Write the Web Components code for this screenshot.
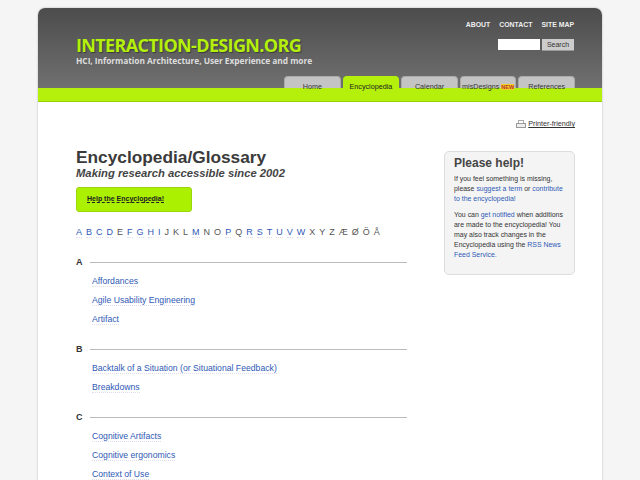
<!DOCTYPE html>
<html>
<head>
<meta charset="utf-8">
<title>Encyclopedia/Glossary</title>
<style>
  html, body { margin: 0; height: 480px; overflow: hidden; background: #f5f5f5; }
  body { font-family: "Liberation Sans", Arial, sans-serif; color: #333; }
</style>
</head>
<body>

<template id="site-header">
  <style>
    :host { display: block; height: 94px; padding: 0; }
    .top {
      height: 80px; display: flex; justify-content: space-between; box-sizing: border-box;
      background: linear-gradient(#4c4c4c, #707070); border-radius: 7px 7px 0 0;
      padding: 0 27px 0 38px; position: relative;
    }
    .logo { padding-top: 28px; }
    .name { font: bold 18px/19px "Open Sans", sans-serif; color: #b4f00c; letter-spacing: -0.65px; text-shadow: 1px 1px 1px #3a3a3a; white-space: nowrap; }
    .tag { font: bold 8.4px/11px "Open Sans", sans-serif; color: #ddd; white-space: nowrap; letter-spacing: -0.05px; }
    .tools { padding-top: 12px; display: flex; flex-direction: column; align-items: flex-end; }
    .tools nav { display: flex; gap: 9px; margin-right: 1px; font: bold 6.9px/9px "Liberation Sans", sans-serif; color: #eee; }
    form { display: flex; gap: 2px; margin: 10px 1px 0 0; }
    .box { width: 42px; height: 11px; background: #fff; }
    .btn { width: 32px; height: 11px; background: #ccc; color: #333; font: 7px/11px "Liberation Sans", sans-serif; text-align: center; border-bottom: 1px solid #999; }
    .tabs { position: absolute; right: 27px; bottom: 0; display: flex; gap: 2px; }
    .bar { height: 14px; background: #b4f00c; border-bottom: 1px solid #9ad00a; box-sizing: border-box; }
  </style>
  <div class="top">
    <div class="logo">
      <div class="name">INTERACTION-DESIGN.ORG</div>
      <div class="tag">HCI, Information Architecture, User Experience and more</div>
    </div>
    <div class="tools">
      <nav><span>ABOUT</span><span>CONTACT</span><span>SITE MAP</span></nav>
      <form><div class="box"></div><div class="btn">Search</div></form>
    </div>
    <div class="tabs"><slot></slot></div>
  </div>
  <div class="bar"></div>
</template>

<template id="nav-tab">
  <style>
    /* label hangs over the lime bar a little, same as the real site */
    :host { display: block; width: 56.6px; height: 12px; background: #c4c4c4; border-radius: 4px 4px 0 0; border: solid #aaa; border-width: 1px 1px 0; box-sizing: border-box; text-align: center; font: 7.2px/19px "Liberation Sans", sans-serif; color: #333; white-space: nowrap; }
    :host([active]) { background: #b4f00c; border-color: #b4f00c; color: #222; }
  </style>
  <slot></slot>
</template>

<template id="help-box">
  <style>
    :host { display: block; width: 131px; height: 124px; box-sizing: border-box; background: #f4f4f4; border: 1px solid #ddd; border-radius: 5px; padding: 4px 9px; font: 6.95px/10px "Liberation Sans", sans-serif; color: #333; }
    h2 { font: bold 12px/15px "Liberation Sans", sans-serif; color: #444; margin: 0 0 3px; }
  </style>
  <h2>Please help!</h2>
  <slot></slot>
</template>

<template id="letter-group">
  <style>
    :host { display: block; margin-bottom: 19px; }
    .head { display: flex; align-items: center; gap: 7px; height: 10px; font: bold 9px/10px "Liberation Sans", sans-serif; color: #333; margin-bottom: 9px; }
    .head i { flex: 1; height: 1px; background: #bbb; }
    .items { display: flex; flex-direction: column; gap: 8px; padding-left: 16px; align-items: flex-start; }
  </style>
  <div class="head"><span></span><i></i></div>
  <div class="items"><slot></slot></div>
</template>

<template id="term-link">
  <style>
    :host { display: block; font: 8.67px/10px "Liberation Sans", sans-serif; color: #2f5ab5; border-bottom: 1px dotted #dde; }
  </style>
  <slot></slot>
</template>

<template id="site-page">
  <style>
    :host { display: block; width: 564px; margin: 8px 0 0 38px; background: #fff; box-shadow: 0 0 2px #aaa; border-radius: 7px 7px 0 0; height: 480px; }
    .print { display: flex; justify-content: flex-end; align-items: center; gap: 2px; padding: 17px 27px 0 0; font: 7.2px/10px "Liberation Sans", sans-serif; color: #333; height: 10px; }
    .print span { text-decoration: underline; }
    .cols { display: flex; justify-content: space-between; padding: 18px 27px 0 38px; }
    .main { width: 331px; }
    .side { margin-top: 4px; }
    h1 { font: bold 17.3px/20px "Liberation Sans", sans-serif; color: #3a3a3a; margin: 0; }
    .sub { font: italic bold 11.25px/14px "Liberation Sans", sans-serif; color: #444; margin: -1px 0 7px; }
    .cta { width: 116px; height: 25px; box-sizing: border-box; background: #abf000; border: 1px solid #9ad60a; border-radius: 3px; padding: 6px 10px; font: bold 7px/10px "Liberation Sans", sans-serif; color: #222; }
    .cta span { border-bottom: 1px dashed #222; }
    .alpha { display: flex; gap: 4px; margin: 15px 0 19px; font: 9px/10px "Liberation Sans", sans-serif; color: #555; }
    .alpha a { color: #2f5ab5; border-bottom: 1px dotted #dde; }
  </style>
  <slot name="header"></slot>
  <div class="print">
    <svg width="10" height="9" viewBox="0 0 10 9"><rect x="2.5" y="0.5" width="5" height="4" fill="#fff" stroke="#aaa"/><rect x="0.5" y="3.5" width="9" height="4" fill="#eee" stroke="#999"/></svg>
    <span>Printer-friendly</span>
  </div>
  <div class="cols">
    <div class="main">
      <h1>Encyclopedia/Glossary</h1>
      <div class="sub">Making research accessible since 2002</div>
      <div class="cta"><span>Help the Encyclopedia!</span></div>
      <div class="alpha">
        <a>A</a><a>B</a><a>C</a><a>D</a><span>E</span><a>F</a><a>G</a><a>H</a><a>I</a><span>J</span><span>K</span><span>L</span><a>M</a><span>N</span><span>O</span><a>P</a><span>Q</span><a>R</a><a>S</a><a>T</a><a>U</a><a>V</a><a>W</a><span>X</span><span>Y</span><span>Z</span><span>Æ</span><span>Ø</span><span>Ö</span><span>Å</span>
      </div>
      <slot></slot>
    </div>
    <div class="side"><slot name="side"></slot></div>
  </div>
</template>

<site-page>
  <site-header slot="header">
    <nav-tab>Home</nav-tab>
    <nav-tab active>Encyclopedia</nav-tab>
    <nav-tab>Calendar</nav-tab>
    <nav-tab>misDesigns <span style="font:bold 5.5px/7px 'Liberation Sans',sans-serif;color:#b33;background:#f0d020">NEW</span></nav-tab>
    <nav-tab>References</nav-tab>
  </site-header>

  <letter-group letter="A">
    <term-link>Affordances</term-link>
    <term-link>Agile Usability Engineering</term-link>
    <term-link>Artifact</term-link>
  </letter-group>
  <letter-group letter="B">
    <term-link>Backtalk of a Situation (or Situational Feedback)</term-link>
    <term-link>Breakdowns</term-link>
  </letter-group>
  <letter-group letter="C">
    <term-link>Cognitive Artifacts</term-link>
    <term-link>Cognitive ergonomics</term-link>
    <term-link>Context of Use</term-link>
  </letter-group>

  <help-box slot="side">
    <p style="margin:0 0 6px">If you feel something is missing, please <a style="color:#2f5ab5">suggest a term</a> or <a style="color:#2f5ab5">contribute to the encyclopedia!</a></p>
    <p style="margin:0">You can <a style="color:#2f5ab5">get notified</a> when additions are made to the encyclopedia! You may also track changes in the Encyclopedia using the <a style="color:#2f5ab5">RSS News Feed Service.</a></p>
  </help-box>
</site-page>

<script>
// every element here only clones its template into an open shadow root
function define(tag, extra) {
  customElements.define(tag, class extends HTMLElement {
    constructor() {
      super();
      var shadow = this.attachShadow({mode: 'open'});
      shadow.appendChild(document.getElementById(tag).content.cloneNode(true));
      if (extra) extra(this, shadow);
    }
  });
}
define('site-header');
define('nav-tab');
define('help-box');
define('term-link');
define('site-page');
define('letter-group', (el, shadow) => {
  shadow.querySelector('.head span').textContent = el.getAttribute('letter');
});
</script>
</body>
</html>
